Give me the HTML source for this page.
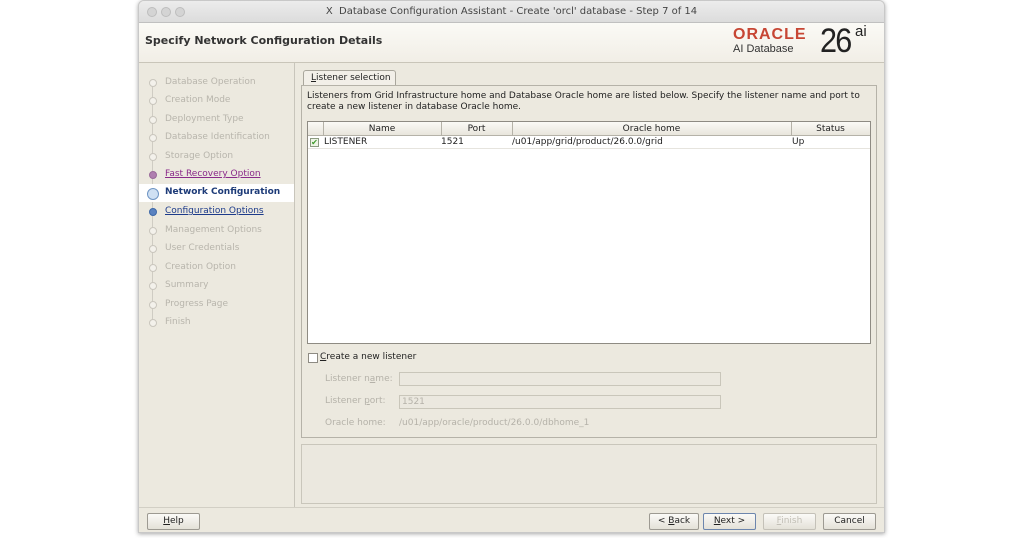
<!DOCTYPE html>
<html><head><style>
*{margin:0;padding:0;box-sizing:border-box}
body{width:1024px;height:538px;background:#fff;position:relative;font-family:"DejaVu Sans","Liberation Sans",sans-serif;font-size:9px;color:#222;overflow:hidden}
.a{position:absolute}
.win{left:138px;top:0;width:747px;height:533px;border:1px solid #c8c8c8;border-radius:6px 6px 0 0;background:#ece9df;box-shadow:0 1px 4px rgba(0,0,0,.35);overflow:hidden}
.tb{left:0;top:0;width:745px;height:22px;background:linear-gradient(#ececec,#dcdcdc);border-bottom:1px solid #c0c0c0;text-align:center;font:10px "DejaVu Sans",sans-serif;color:#444;line-height:22px}
.dot{top:6px;width:10px;height:10px;border-radius:50%;background:#d4d4d4;border:1px solid #bdbdbd}
.hd{left:0;top:22px;width:745px;height:40px;background:linear-gradient(#fbfaf6,#f1eee6);border-bottom:1px solid #c9c5b9}
.step{left:26px;color:#b8b5ac;font-size:9px}
.st{left:10px;width:8px;height:8px;border-radius:50%;border:1px solid #c9c6bd;background:#f3f1eb}
.field{border:1px solid #c9c6ba;background:#ebe8df;height:14px}
.btn{height:17px;border:1px solid #9d9a92;border-radius:2px;background:linear-gradient(#fbfaf7,#e4e1d8);text-align:center;line-height:15px;font-size:9px}
</style></head><body>
<div class="a win">
 <div class="a tb">X&nbsp; Database Configuration Assistant - Create 'orcl' database - Step 7 of 14</div>
 <div class="a dot" style="left:8px"></div><div class="a dot" style="left:22px"></div><div class="a dot" style="left:36px"></div>
 <div class="a hd">
  <div class="a" style="left:6px;top:11px;font-weight:bold;font-size:11px;color:#333">Specify Network Configuration Details</div>
  <div class="a" style="left:594px;top:3px;font:bold 16px 'Liberation Sans',sans-serif;color:#c74634;letter-spacing:1px">ORACLE</div>
  <div class="a" style="left:594px;top:20px;font:11px 'Liberation Sans',sans-serif;color:#333">AI Database</div>
  <div class="a" style="left:681px;top:-1px;font:34px 'Liberation Sans',sans-serif;color:#222;letter-spacing:-2px;transform:scaleX(.9);transform-origin:left">26</div>
  <div class="a" style="left:716px;top:0px;font:15px 'Liberation Sans',sans-serif;color:#222">ai</div>
 </div>
 <div class="a" style="left:155px;top:62px;width:1px;height:445px;background:#c8c5bb"></div>
 <div class="a" style="left:13px;top:82px;width:1px;height:242px;background:#cfccc3"></div>
 <div class="a" style="left:0;top:183px;width:155px;height:18px;background:#fff"></div>
 <div class="a st" style="top:78px"></div><div class="a step" style="top:76px">Database Operation</div>
 <div class="a st" style="top:96px"></div><div class="a step" style="top:94px">Creation Mode</div>
 <div class="a st" style="top:115px"></div><div class="a step" style="top:113px">Deployment Type</div>
 <div class="a st" style="top:133px"></div><div class="a step" style="top:131px">Database Identification</div>
 <div class="a st" style="top:152px"></div><div class="a step" style="top:150px">Storage Option</div>
 <div class="a st" style="top:170px;background:#b07fb0;border-color:#9a6a9a"></div><div class="a step" style="top:168px;color:#8a2a8a;text-decoration:underline">Fast Recovery Option</div>
 <div class="a st" style="top:187px;left:8px;width:12px;height:12px;background:#cfe0f3;border-color:#6f95c4"></div><div class="a step" style="top:186px;color:#1d3b78;font-weight:bold">Network Configuration</div>
 <div class="a st" style="top:207px;background:#5a82c0;border-color:#3d68a8"></div><div class="a step" style="top:205px;color:#1d3b8a;text-decoration:underline">Configuration Options</div>
 <div class="a st" style="top:226px"></div><div class="a step" style="top:224px">Management Options</div>
 <div class="a st" style="top:244px"></div><div class="a step" style="top:242px">User Credentials</div>
 <div class="a st" style="top:263px"></div><div class="a step" style="top:261px">Creation Option</div>
 <div class="a st" style="top:281px"></div><div class="a step" style="top:279px">Summary</div>
 <div class="a st" style="top:300px"></div><div class="a step" style="top:298px">Progress Page</div>
 <div class="a st" style="top:318px"></div><div class="a step" style="top:316px">Finish</div>
 <div class="a" style="left:164px;top:69px;width:93px;height:16px;border:1px solid #a9a69c;border-bottom:none;border-radius:3px 3px 0 0;background:#f2efe8;padding:2px 0 0 7px"><u>L</u>istener selection</div>
 <div class="a" style="left:162px;top:84px;width:576px;height:353px;border:1px solid #b5b2a8;background:#ece9df"></div>
 <div class="a" style="left:168px;top:90px;width:560px;line-height:11px">Listeners from Grid Infrastructure home and Database Oracle home are listed below. Specify the listener name and port to create a new listener in database Oracle home.</div>
 <div class="a" style="left:168px;top:120px;width:564px;height:223px;border:1px solid #8e8b83;background:#fff">
  <div class="a" style="left:0;top:0;width:562px;height:14px;background:linear-gradient(#fbfaf6,#e8e5dc);border-bottom:1px solid #b5b2a8"></div>
  <div class="a" style="left:15px;top:0;width:1px;height:14px;background:#b5b2a8"></div>
  <div class="a" style="left:133px;top:0;width:1px;height:14px;background:#b5b2a8"></div>
  <div class="a" style="left:204px;top:0;width:1px;height:14px;background:#b5b2a8"></div>
  <div class="a" style="left:483px;top:0;width:1px;height:14px;background:#b5b2a8"></div>
  <div class="a" style="left:15px;top:2px;width:118px;text-align:center">Name</div>
  <div class="a" style="left:133px;top:2px;width:71px;text-align:center">Port</div>
  <div class="a" style="left:204px;top:2px;width:279px;text-align:center">Oracle home</div>
  <div class="a" style="left:483px;top:2px;width:79px;text-align:center">Status</div>
  <div class="a" style="left:0;top:14px;width:562px;height:13px;border-bottom:1px solid #e6e4de"></div>
  <div class="a" style="left:2px;top:16px;width:9px;height:9px;border:1px solid #8c9a80;background:#eef5e6;color:#3d9a2a;font-size:8px;line-height:8px;text-align:center">✔</div>
  <div class="a" style="left:16px;top:15px">LISTENER</div>
  <div class="a" style="left:133px;top:15px">1521</div>
  <div class="a" style="left:204px;top:15px">/u01/app/grid/product/26.0.0/grid</div>
  <div class="a" style="left:484px;top:15px">Up</div>
 </div>
 <div class="a" style="left:169px;top:352px;width:10px;height:10px;border:1px solid #8e8b83;background:#fff"></div>
 <div class="a" style="left:181px;top:351px"><u>C</u>reate a new listener</div>
 <div class="a" style="left:186px;top:373px;color:#b5b2a9">Listener n<u>a</u>me:</div>
 <div class="a field" style="left:260px;top:371px;width:322px"></div>
 <div class="a" style="left:186px;top:395px;color:#b5b2a9">Listener <u>p</u>ort:</div>
 <div class="a field" style="left:260px;top:394px;width:322px;color:#b5b2a9;padding:1px 0 0 2px">1521</div>
 <div class="a" style="left:186px;top:417px;color:#b5b2a9">Oracle home:</div>
 <div class="a" style="left:260px;top:417px;color:#b5b2a9">/u01/app/oracle/product/26.0.0/dbhome_1</div>
 <div class="a" style="left:162px;top:443px;width:576px;height:60px;border:1px solid #c9c6bb;background:#ebe8df"></div>
 <div class="a" style="left:0;top:506px;width:745px;height:1px;background:#d2cfc5"></div>
 <div class="a btn" style="left:8px;top:512px;width:53px"><u>H</u>elp</div>
 <div class="a btn" style="left:510px;top:512px;width:50px">&lt; <u>B</u>ack</div>
 <div class="a btn" style="left:564px;top:512px;width:53px;border-color:#6d86ad"><u>N</u>ext &gt;</div>
 <div class="a btn" style="left:624px;top:512px;width:53px;color:#c2bfb6;border-color:#c4c1b8"><u>F</u>inish</div>
 <div class="a btn" style="left:684px;top:512px;width:53px">Cancel</div>
</div>
</body></html>
